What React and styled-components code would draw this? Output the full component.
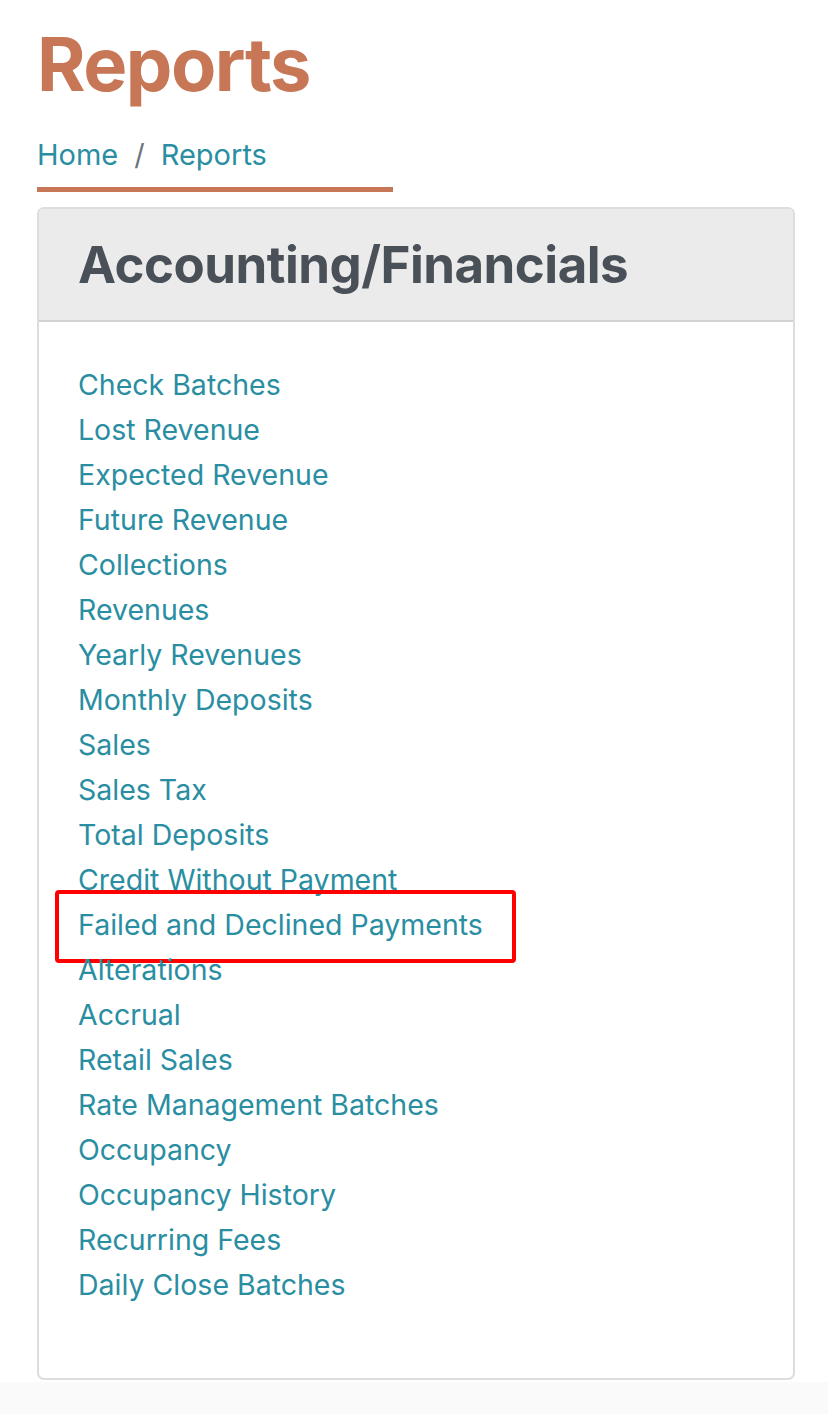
import React from 'react';
import styled, { createGlobalStyle } from 'styled-components';

const GlobalStyle = createGlobalStyle`
  html, body {
    margin: 0;
    padding: 0;
    background: #fafafa;
    font-family: Inter, "Noto Sans", "Liberation Sans", sans-serif;
  }
`;

const reports = [
  'Check Batches',
  'Lost Revenue',
  'Expected Revenue',
  'Future Revenue',
  'Collections',
  'Revenues',
  'Yearly Revenues',
  'Monthly Deposits',
  'Sales',
  'Sales Tax',
  'Total Deposits',
  'Credit Without Payment',
  'Failed and Declined Payments',
  'Alterations',
  'Accrual',
  'Retail Sales',
  'Rate Management Batches',
  'Occupancy',
  'Occupancy History',
  'Recurring Fees',
  'Daily Close Batches',
];

function App() {
  return (
    <>
      <GlobalStyle />
      <Page>
        <Title>Reports</Title>
        <Breadcrumb>
          <Crumb href="#">Home</Crumb>
          <Separator>/</Separator>
          <Crumb href="#">Reports</Crumb>
        </Breadcrumb>
        <Card>
          <CardHeader>
            <CardTitle>Accounting/Financials</CardTitle>
          </CardHeader>
          <CardBody>
            <ReportList>
              {reports.map((name) => (
                <ReportItem key={name} $highlight={name === 'Failed and Declined Payments'}>
                  <ReportLink href="#">{name}</ReportLink>
                </ReportItem>
              ))}
            </ReportList>
          </CardBody>
        </Card>
      </Page>
    </>
  );
}

const Page = styled.div`
  background: #ffffff;
  padding: 18px 33px 1px 37px;
`;

const Title = styled.h1`
  margin: 0;
  font-size: 74px;
  font-weight: 700;
  line-height: 92px;
  letter-spacing: -1.5px;
  color: #c87756;
`;

const Breadcrumb = styled.nav`
  display: flex;
  align-items: center;
  gap: 16px;
  width: 356px;
  height: 62px;
  margin-top: 20px;
  border-bottom: 5px solid #c87756;
  box-sizing: border-box;
  padding-bottom: 9px;
  font-size: 29px;
`;

const Crumb = styled.a`
  color: #2a8ea2;
  text-decoration: none;
`;

const Separator = styled.span`
  color: #6c757d;
`;

const Card = styled.section`
  margin-top: 15px;
  margin-bottom: 1px;
  border: 2px solid #dddddd;
  border-radius: 7px;
  background: #ffffff;
  overflow: hidden;
`;

const CardHeader = styled.header`
  background: #ebebeb;
  border-bottom: 2px solid #d2d2d2;
  height: 111px;
  display: flex;
  align-items: center;
  padding: 0 39px;
`;

const CardTitle = styled.h2`
  margin: 0;
  font-size: 51px;
  font-weight: 700;
  color: #4a5058;
  letter-spacing: -0.5px;
`;

const CardBody = styled.div`
  padding: 40px 39px 71px;
`;

const ReportList = styled.ul`
  list-style: none;
  margin: 0;
  padding: 0;
`;

const ReportItem = styled.li`
  position: relative;
  height: 45px;
  line-height: 45px;
  font-size: 28.5px;

  ${(p) =>
    p.$highlight &&
    `
    &::after {
      content: '';
      position: absolute;
      left: -23px;
      top: -12px;
      width: 461px;
      height: 73px;
      border: 4px solid #ff0000;
      border-radius: 4px;
      box-sizing: border-box;
      pointer-events: none;
    }
  `}
`;

const ReportLink = styled.a`
  color: #2a8ea2;
  text-decoration: none;
`;

export default App;
